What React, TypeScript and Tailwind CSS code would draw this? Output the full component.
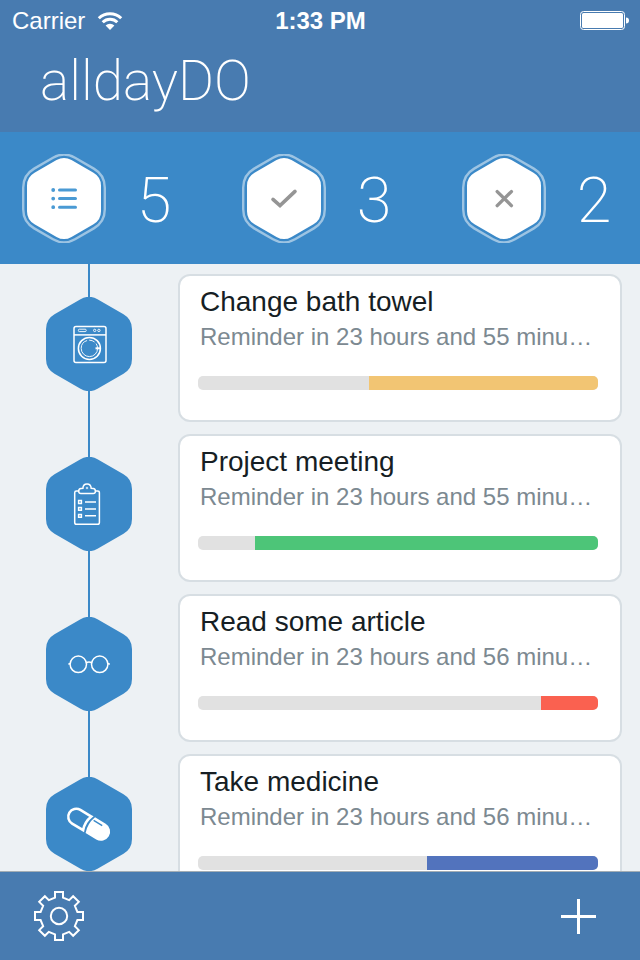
import type { ReactNode } from "react";

/** Path of a pointy-top hexagon with rounded corners, centred on (cx, cy). */
function hexagon(cx: number, cy: number, width: number, radius: number) {
  const size = width / Math.sqrt(3);
  const cut = radius * Math.tan(Math.PI / 6);
  const corners = Array.from({ length: 6 }, (_, i) => {
    const angle = (Math.PI / 3) * i - Math.PI / 2;
    return [cx + size * Math.cos(angle), cy + size * Math.sin(angle)];
  });
  const toward = (a: number[], b: number[]) => {
    const t = cut / size;
    return `${(a[0] + (b[0] - a[0]) * t).toFixed(2)} ${(a[1] + (b[1] - a[1]) * t).toFixed(2)}`;
  };
  return (
    corners
      .map((corner, i) => {
        const previous = corners[(i + 5) % 6];
        const next = corners[(i + 1) % 6];
        return `${i ? "L" : "M"}${toward(corner, previous)}A${radius} ${radius} 0 0 1 ${toward(corner, next)}`;
      })
      .join("") + "Z"
  );
}

/** Outline of an eight-toothed gear centred on (c, c). */
function gear(c: number) {
  const points: string[] = [];
  for (let k = 0; k < 8; k++) {
    const a = (Math.PI / 4) * k;
    for (const [x, y] of [[-4, -18.4], [-4, -24], [4, -24], [4, -18.4]]) {
      const px = c + x * Math.cos(a) - y * Math.sin(a);
      const py = c + x * Math.sin(a) + y * Math.cos(a);
      points.push(`${px.toFixed(2)},${py.toFixed(2)}`);
    }
  }
  return points.join(" ");
}

const BADGE = hexagon(43, 47, 86, 17);
const STAT_RING = hexagon(42, 44.5, 81.6, 22);
const STAT_FILL = hexagon(42, 44.5, 74, 15);
const GEAR = gear(26);

function StatusBar() {
  return (
    <div className="grid h-10 grid-cols-3 items-center pt-0.5 pr-[11px] pl-3 text-2xl">
      <div className="flex items-center gap-3">
        <span>Carrier</span>
        <svg width="26" height="20" viewBox="0 0 26 20" fill="none" stroke="currentColor" aria-label="Wi-Fi">
          <path d="M1.8 7.2A16 16 0 0 1 24.2 7.2" strokeWidth="3" />
          <path d="M5.7 11.2A10.4 10.4 0 0 1 20.3 11.2" strokeWidth="3" />
          <path d="M13 19L8.6 14.6A6.3 6.3 0 0 1 17.4 14.6Z" fill="currentColor" stroke="none" />
        </svg>
      </div>
      <span className="text-center font-bold">1:33 PM</span>
      <svg className="justify-self-end" width="49" height="20" viewBox="0 0 49 20" aria-label="Battery full">
        <rect x="0.5" y="0.5" width="44" height="18" rx="3" fill="none" stroke="currentColor" />
        <rect x="2" y="2" width="41" height="15" rx="1.5" fill="currentColor" />
        <path d="M46 6.5Q49 6.5 49 9.5T46 12.5Z" fill="currentColor" />
      </svg>
    </div>
  );
}

const listGlyph = (
  <g stroke="#4a9ad4" strokeWidth="3" strokeLinecap="round">
    <path d="M37.5 36H53.5M37.5 44.6H53.5M37.5 53.2H53.5" />
    <path d="M31.2 36h.01M31.2 44.6h.01M31.2 53.2h.01" strokeWidth="3.8" />
  </g>
);
const checkGlyph = (
  <path d="M31 45.4L38 51.6L53 37.4" fill="none" stroke="#959595" strokeWidth="3.6" strokeLinecap="round" />
);
const crossGlyph = (
  <path d="M35.2 37.6L49.4 51.6M49.4 37.6L35.2 51.6" fill="none" stroke="#959595" strokeWidth="3.4" strokeLinecap="round" />
);

const stats = [
  { label: "All reminders", count: 5, glyph: listGlyph },
  { label: "Completed", count: 3, glyph: checkGlyph },
  { label: "Missed", count: 2, glyph: crossGlyph },
];

const washer = (
  <>
    <rect x="28" y="29.5" width="32" height="36" rx="2" />
    <path d="M28 37.9H60" />
    <rect x="32.4" y="32.2" width="7.8" height="2.4" rx="1" strokeWidth="0.9" />
    <circle cx="48.7" cy="33.4" r="1.2" strokeWidth="0.9" />
    <circle cx="52.9" cy="33.4" r="1.2" strokeWidth="0.9" />
    <circle cx="43.4" cy="51.4" r="11" />
    <circle cx="43.4" cy="51.4" r="8.2" strokeWidth="0.9" strokeDasharray="36 2 6 2" />
    <path d="M49.5 51.3H55" strokeWidth="2" />
  </>
);
const clipboard = (
  <>
    <path d="M32.5 34H30.4Q28.7 34 28.7 35.7V65.4Q28.7 67.2 30.4 67.2H51.6Q53.4 67.2 53.4 65.4V35.7Q53.4 34 51.6 34H49.6" />
    <path d="M35 36.5H47.2Q49.4 36.5 49.4 34.2Q49.4 31.8 47.2 31.6L45.2 31.4Q45 27 41 27T36.9 31.4L34.9 31.6Q32.7 31.8 32.7 34.2Q32.7 36.5 35 36.5Z" />
    <circle cx="41" cy="31" r="0.8" strokeWidth="0.8" />
    <path d="M32.6 43.6h2.8v2.8h-2.8ZM32.6 50.5h2.8v2.8h-2.8ZM32.6 57.4h2.8v2.8h-2.8Z" />
    <path d="M39 45H50M39 52H50M39 58.7H50" strokeWidth="1.5" />
  </>
);
const glasses = (
  <>
    <circle cx="32.3" cy="47.3" r="8.2" />
    <circle cx="53.7" cy="47.3" r="8.2" />
    <path d="M40.3 45.8Q43 44.2 45.7 45.8M22.4 47.3L24.2 46.6M61.8 46.6L63.8 47.3" strokeWidth="1.6" />
  </>
);
const pill = (
  <g transform="translate(42.6 47.2) rotate(31)">
    <path d="M-1.6 -8H-14.4A8 8 0 0 0 -14.4 8H-1.6Q-4.6 0 -1.6 -8Z" strokeWidth="2.6" />
    <path d="M2 -9.2H14.4A9.2 9.2 0 0 1 14.4 9.2H2Q-1.4 0 2 -9.2Z" fill="#fff" stroke="none" />
    <path d="M2.4 -5.8H12.4" stroke="#3b89c8" strokeWidth="1.4" />
  </g>
);

type Reminder = { title: string; due: string; sevenths: number; bar: string; icon: ReactNode };

const reminders: Reminder[] = [
  { title: "Change bath towel", due: "Reminder in 23 hours and 55 minu…", sevenths: 4, bar: "bg-[#f2c573]", icon: washer },
  { title: "Project meeting", due: "Reminder in 23 hours and 55 minu…", sevenths: 6, bar: "bg-[#4dc578]", icon: clipboard },
  { title: "Read some article", due: "Reminder in 23 hours and 56 minu…", sevenths: 1, bar: "bg-[#fa6150]", icon: glasses },
  { title: "Take medicine", due: "Reminder in 23 hours and 56 minu…", sevenths: 3, bar: "bg-[#5273bd]", icon: pill },
];

function ReminderRow({ title, due, sevenths, bar, icon }: Reminder) {
  return (
    <li className="flex h-40">
      <div className="flex w-[178px] shrink-0 flex-col items-center">
        <div className="w-0.5 flex-1 bg-[#3b89c8]" />
        <svg width="86" height="94" viewBox="0 0 86 94" aria-hidden="true">
          <path d={BADGE} fill="#3b89c8" />
          <g fill="none" stroke="#fff" strokeWidth="1.5">
            {icon}
          </g>
        </svg>
        <div className="w-0.5 flex-1 bg-[#3b89c8]" />
      </div>
      <div className="min-w-0 flex-1 pt-[10px] pr-[18px] pb-0.5">
        <article className="h-full rounded-xl border-2 border-[#d7dee3] bg-white pt-2 pr-[22px] pl-[18px]">
          <h2 className="truncate px-0.5 text-[28px] leading-9 text-[#161e24]">{title}</h2>
          <p className="truncate px-0.5 text-2xl leading-[34px] text-[#7c8991]">{due}</p>
          <div
            role="progressbar"
            aria-label={title}
            aria-valuemin={0}
            aria-valuemax={7}
            aria-valuenow={sevenths}
            className="mt-[22px] flex h-3.5 justify-end overflow-hidden rounded-[5px] bg-[#e1e1e1]"
          >
            <div className={bar} style={{ width: `${(sevenths / 7) * 100}%` }} />
          </div>
        </article>
      </div>
    </li>
  );
}

export default function App() {
  return (
    <div className="flex h-screen flex-col bg-[#edf1f4] font-['Liberation_Sans',Arial,sans-serif]">
      <header className="bg-[#487bb0] pb-[10px] text-white">
        <StatusBar />
        <h1 className="pl-10 font-['Roboto','Liberation_Sans',sans-serif] text-[55px] leading-[82px] font-extralight">
          alldayDO
        </h1>
      </header>

      <nav className="flex h-[132px] shrink-0 items-center justify-between bg-[#3b89c8] pr-7 pl-[22px] text-white">
        {stats.map(({ label, count, glyph }) => (
          <button key={label} type="button" aria-label={`${label}: ${count}`} className="flex items-center gap-[30px]">
            <svg width="84" height="89" viewBox="0 0 84 89" aria-hidden="true">
              <path d={STAT_RING} fill="none" stroke="#9dc4e3" strokeWidth="2.4" />
              <path d={STAT_FILL} fill="#fff" />
              {glyph}
            </svg>
            <span className="flex w-9 justify-center pt-1 font-['Roboto','Liberation_Sans',sans-serif] text-[63px] leading-none font-extralight">
              {count}
            </span>
          </button>
        ))}
      </nav>

      <main className="min-h-0 flex-1 overflow-hidden">
        <ul>
          {reminders.map((reminder) => (
            <ReminderRow key={reminder.title} {...reminder} />
          ))}
        </ul>
      </main>

      <footer className="flex h-[89px] shrink-0 items-center justify-between border-t border-[#a3adb4] bg-[#487bb0] pr-11 pl-[33px] text-white">
        <button type="button" aria-label="Settings">
          <svg width="52" height="52" viewBox="0 0 52 52" fill="none" stroke="currentColor" strokeWidth="2">
            <polygon points={GEAR} />
            <circle cx="26" cy="26" r="8.2" />
          </svg>
        </button>
        <button type="button" aria-label="Add reminder">
          <svg width="35" height="35" viewBox="0 0 35 35" stroke="currentColor" strokeWidth="3">
            <path d="M17.5 0V35M0 17.5H35" />
          </svg>
        </button>
      </footer>
    </div>
  );
}
